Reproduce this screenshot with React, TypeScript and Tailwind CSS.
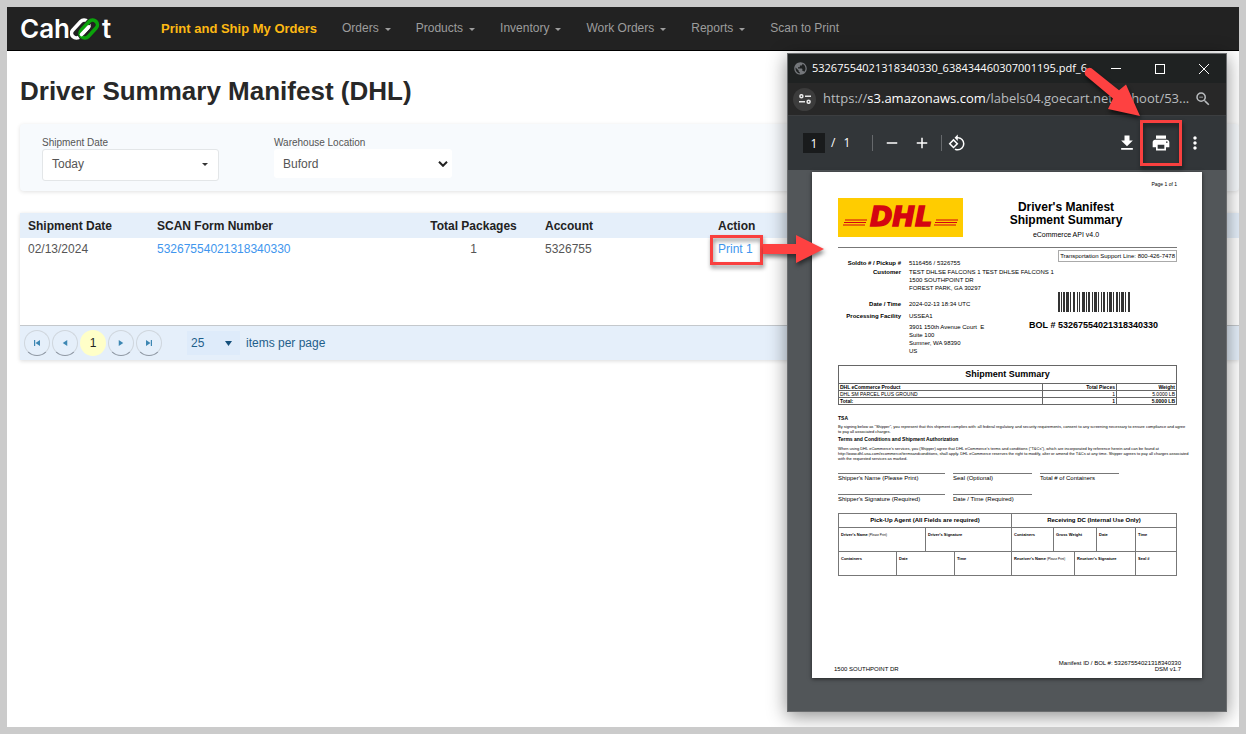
import type { ReactNode } from "react";
import {
  MdAdd,
  MdFileDownload,
  MdMoreVert,
  MdPrint,
  MdPublic,
  MdRemove,
  MdRotate90DegreesCcw,
  MdZoomOut,
} from "react-icons/md";

const menus = ["Orders", "Products", "Inventory", "Work Orders", "Reports"];

function Caret({ className }: { className: string }) {
  return (
    <svg viewBox="0 0 10 6" className={className} fill="currentColor" preserveAspectRatio="none" aria-hidden="true">
      <path d="M0 0h10L5 6z" />
    </svg>
  );
}

function Logo() {
  return (
    <a href="#home" aria-label="Cahoot" className="flex h-6 w-[141px] items-center font-[Inter,sans-serif] text-[26px] leading-6 font-semibold text-white">
      <span>Cah</span>
      <svg viewBox="0 0 30 22" className="h-[22px] w-[30px] shrink-0" fill="none" strokeWidth="3.6" aria-hidden="true">
        <rect x="5.500" y="0.500" width="9.500" height="21" rx="4.750" stroke="#fff" transform="rotate(43 10.250 11)" />
        <rect x="14" y="0.500" width="9.500" height="21" rx="4.750" stroke="#222" strokeWidth="5.400" transform="rotate(43 18.750 11)" />
        <rect x="14" y="0.500" width="9.500" height="21" rx="4.750" stroke="#0ba30b" transform="rotate(43 18.750 11)" />
        <path d="M11.500 16.500 18.800 8.800" stroke="#fff" strokeLinecap="round" />
      </svg>
      <span className="pl-0.5">t</span>
    </a>
  );
}

function NavBar() {
  return (
    <nav className="flex h-11 items-center border-b border-black bg-[#222] pl-[13px] text-xs text-[#9d9d9d]">
      <Logo />
      <ul className="flex items-center gap-[25px]">
        <li>
          <a href="#ship" className="text-[13px] font-bold text-[#fdb913]">Print and Ship My Orders</a>
        </li>
        {menus.map((m) => (
          <li key={m}>
            <button type="button" className="flex items-center gap-1.5">
              {m}
              <Caret className="mt-0.5 h-[3px] w-1.5" />
            </button>
          </li>
        ))}
        <li>
          <a href="#scan">Scan to Print</a>
        </li>
      </ul>
    </nav>
  );
}

function Filters() {
  return (
    <section className="flex gap-[55px] rounded bg-[#f7fafd] px-[22px] pt-[13px] pb-2.5 text-[#555] shadow-[0_1px_4px_rgba(0,0,0,0.12)]">
      <div className="w-[177px]">
        <label htmlFor="ship-date" className="block text-[10px] leading-3">Shipment Date</label>
        <button id="ship-date" type="button" className="flex h-8 w-full items-center justify-between rounded-[3px] border border-[#e3e6e8] bg-white pr-2.5 pb-0.5 pl-[9px] text-xs">
          Today
          <Caret className="h-[3px] w-1.5 text-[#333]" />
        </button>
      </div>
      <div className="w-[178px]">
        <label htmlFor="warehouse" className="block text-[10px] leading-3">Warehouse Location</label>
        <div className="relative">
          <select id="warehouse" className="h-[29px] w-full appearance-none rounded-[3px] bg-white pl-[9px] text-xs">
            <option>Buford</option>
          </select>
          <svg viewBox="0 0 10 6" className="pointer-events-none absolute top-3 right-1 h-1.5 w-2.5" fill="none" stroke="#222" strokeWidth="2" aria-hidden="true">
            <path d="m1 .8 4 4 4-4" />
          </svg>
        </div>
      </div>
    </section>
  );
}

function PageButton({ label, children }: { label: string; children: ReactNode }) {
  return (
    <button type="button" aria-label={label} className="flex size-[26px] items-center justify-center rounded-full border border-[#cfd6dd] border-b-[#8f98a3] text-[#3d87b3]">
      <svg viewBox="0 0 8 8" className="size-1.5" fill="currentColor" aria-hidden="true">{children}</svg>
    </button>
  );
}

function Pager() {
  return (
    <div className="flex h-[35px] items-center border-t border-[#c4c8cc] bg-[#e5effa] pl-1 text-xs text-[#1f5f8b]">
      <div className="flex gap-0.5">
        <PageButton label="First page"><path d="M0 0h1.600v8H0zM8 0v8L2 4z" /></PageButton>
        <PageButton label="Previous page"><path d="M7 0v8L1 4z" /></PageButton>
        <button type="button" className="size-[26px] rounded-full bg-[#ffffc8] text-[#222]">1</button>
        <PageButton label="Next page"><path d="M1 0v8l6-4z" /></PageButton>
        <PageButton label="Last page"><path d="M6.400 0H8v8H6.400zM0 0v8l6-4z" /></PageButton>
      </div>
      <div className="relative ml-[25px] w-[53px]">
        <select id="page-size" className="h-6 w-full appearance-none bg-[#deebfa] pl-1">
          <option>25</option>
        </select>
        <Caret className="pointer-events-none absolute top-2.5 right-2 h-[5px] w-[7px] text-[#15507c]" />
      </div>
      <label htmlFor="page-size" className="pl-1.5">items per page</label>
    </div>
  );
}

function Manifests() {
  return (
    <section className="mt-[22px] shadow-[0_1px_4px_rgba(0,0,0,0.15)]">
      <div className="min-h-28">
        <table className="w-full table-fixed text-left text-xs text-[#555]">
          <colgroup>
            <col className="w-[129px]" />
            <col className="w-[261px]" />
            <col className="w-[127px]" />
            <col className="w-[173px]" />
            <col />
          </colgroup>
          <thead className="h-[25px] bg-[#e5effa] text-[#222]">
            <tr>
              <th className="px-2">Shipment Date</th>
              <th className="px-2">SCAN Form Number</th>
              <th className="px-2 text-center">Total Packages</th>
              <th className="px-2">Account</th>
              <th className="px-2">Action</th>
            </tr>
          </thead>
          <tbody>
            <tr className="h-[22px]">
              <td className="px-2">02/13/2024</td>
              <td className="px-2">
                <a href="#form" className="text-[#4096ee]">53267554021318340330</a>
              </td>
              <td className="px-2 text-center">1</td>
              <td className="px-2">5326755</td>
              <td className="px-2">
                <span className="relative inline-block">
                  <a href="#print" className="text-[#4096ee]">Print 1</a>
                  <span className="absolute -top-1.5 -right-2.5 -bottom-2 -left-2 border-3 border-[#f9403f] drop-shadow-[1px_3px_2px_rgba(0,0,0,0.45)]" />
                  <svg viewBox="0 0 64 30" className="absolute top-[-7px] left-full z-20 ml-2.5 h-[30px] w-16 drop-shadow-[1px_3px_2px_rgba(0,0,0,0.5)]" fill="#fe4141" aria-hidden="true">
                    <path d="M0 10h33V1l28 14-28 14v-9H0z" />
                  </svg>
                </span>
              </td>
            </tr>
          </tbody>
        </table>
      </div>
      <Pager />
    </section>
  );
}

function BrowserChrome() {
  return (
    <>
      <div className="flex h-[29px] items-center bg-[#1f2222] pr-[17px] pl-[5px] font-['Open_Sans',sans-serif] text-[11px] text-white">
        <MdPublic className="size-[15px] shrink-0 text-[#74777b]" />
        <span className="flex-1 pl-1 whitespace-nowrap">53267554021318340330_638434460307001195.pdf_6</span>
        <div className="flex shrink-0 items-center gap-[34px]">
          <button type="button" aria-label="Minimize" className="h-px w-2.5 bg-white" />
          <button type="button" aria-label="Maximize" className="size-2.5 border border-white" />
          <button type="button" aria-label="Close" className="size-2.5">
            <svg viewBox="0 0 10 10" className="size-2.5" stroke="#fff" aria-hidden="true">
              <path d="m0 0 10 10M10 0 0 10" />
            </svg>
          </button>
        </div>
      </div>
      <div className="flex h-[33px] items-center border-b border-[#3c3e40] bg-[#282828] pr-3.5 pl-[5px] font-['Open_Sans',sans-serif] text-[13px] text-[#b9bcbf]">
        <button type="button" aria-label="Site information" className="flex size-[23px] shrink-0 items-center justify-center rounded-full bg-[#3c3c3c]">
          <svg viewBox="0 0 12 10" className="h-2.5 w-3" fill="none" stroke="#e8e8e8" strokeWidth="1.500" aria-hidden="true">
            <circle cx="2.400" cy="2.200" r="1.500" />
            <path d="M6 2.200h6M0 7.800h6" />
            <circle cx="9.600" cy="7.800" r="1.500" />
          </svg>
        </button>
        <span className="flex-1 pl-[7px] whitespace-nowrap">
          https://<span className="text-white">s3.amazonaws.com</span>/labels04.goecart.net/cahoot/53...
        </span>
        <MdZoomOut className="size-[18px] shrink-0" />
      </div>
      <div className="flex h-[54px] items-center bg-[#323639] pr-[21px] pl-[15px] font-['Open_Sans',sans-serif] text-xs text-white">
        <input aria-label="Page number" defaultValue="1" className="h-5 w-[22px] bg-[#191b1c] text-center" />
        <span className="pl-1.5">/</span>
        <span className="pl-2">1</span>
        <span className="ml-[22px] h-4 w-px bg-[#66696c]" />
        <button type="button" aria-label="Zoom out" className="ml-2.5"><MdRemove className="size-[18px]" /></button>
        <button type="button" aria-label="Zoom in" className="ml-3"><MdAdd className="size-[18px]" /></button>
        <span className="ml-2.5 h-4 w-px bg-[#66696c]" />
        <button type="button" aria-label="Rotate" className="ml-1.5"><MdRotate90DegreesCcw className="size-[18px]" /></button>
        <span className="flex-1" />
        <button type="button" aria-label="Download"><MdFileDownload className="size-5" /></button>
        <button type="button" aria-label="Print" className="relative ml-3.5">
          <MdPrint className="size-5" />
          <span className="absolute -inset-x-[11px] -inset-y-[13px] border-3 border-[#f9403f] drop-shadow-[1px_3px_2px_rgba(0,0,0,0.5)]" />
        </button>
        <button type="button" aria-label="More" className="ml-3.5"><MdMoreVert className="size-5" /></button>
      </div>
    </>
  );
}

const bars = [
  [0, 2], [3, 1], [5, 2], [8, 3], [12, 1], [15, 2], [19, 1], [21, 1], [24, 3], [28, 1], [30, 2],
  [34, 1], [36, 3], [40, 1], [43, 1], [45, 2], [49, 1], [51, 3], [55, 1], [58, 2], [61, 1], [63, 3], [67, 1], [70, 2],
];

function Detail({ label, gap, children }: { label: string; gap: string; children: ReactNode }) {
  return (
    <div className={`flex gap-2 ${gap}`}>
      <dt className="w-[63px] shrink-0 text-right font-bold whitespace-nowrap">{label}</dt>
      <dd className="whitespace-nowrap">{children}</dd>
    </div>
  );
}

function SignLine({ width, children }: { width: string; children: ReactNode }) {
  return <div className={`border-t border-[#777] whitespace-nowrap ${width}`}>{children}</div>;
}

function Small({ children }: { children: ReactNode }) {
  return <span className="text-[3px] font-normal">{children}</span>;
}

function ManifestPage() {
  return (
    <article className="flex min-h-[506px] flex-col bg-white pt-2 pr-[25px] pl-[26px] text-[6px] leading-[8px] text-black shadow-[0_1px_4px_rgba(0,0,0,0.6)]">
      <p className="text-right text-[5px]">Page 1 of 1</p>
      <header className="mt-2.5 flex h-[50px] border-b border-[#777]">
        <svg viewBox="0 0 125 39" className="h-[39px] w-[125px] shrink-0" role="img" aria-label="DHL">
          <rect width="125" height="39" fill="#fc0" />
          <g stroke="#d40511" strokeWidth="1.200">
            <path d="M7 22h22M6 24.500h22M5 27h22M98 22h22M97 24.500h22M96 27h22" />
          </g>
          <text x="63" y="28" textAnchor="middle" fill="#d40511" stroke="#d40511" strokeWidth="1.500" className="font-['DejaVu_Sans',sans-serif] text-[27px] font-bold italic">DHL</text>
        </svg>
        <div className="flex-1 pt-[3px] pr-2 text-center">
          <h2 className="text-xs leading-[13px] font-bold">Driver's Manifest<br />Shipment Summary</h2>
          <p className="pt-1 text-[7px] leading-[8px]">eCommerce API v4.0</p>
        </div>
      </header>
      <div className="flex h-[117px]">
        <dl className="w-[172px] shrink-0 pt-[11px]">
          <Detail label="Soldto # / Pickup #" gap="mb-px">5116456 / 5326755</Detail>
          <Detail label="Customer" gap="mb-2">
            TEST DHLSE FALCONS 1 TEST DHLSE FALCONS 1<br />1500 SOUTHPOINT DR<br />FOREST PARK, GA 30297
          </Detail>
          <Detail label="Date / Time" gap="mb-1">2024-02-13 18:34 UTC</Detail>
          <Detail label="Processing Facility" gap="mb-[3px]">USSEA1</Detail>
          <Detail label="" gap="">
            3901 150th Avenue Court&nbsp; E<br />Suite 100<br />Sumner, WA 98390<br />US
          </Detail>
        </dl>
        <div className="flex flex-1 flex-col items-end">
          <p className="mt-0.5 border border-[#aaa] px-px py-px whitespace-nowrap">Transportation Support Line: 800-426-7478</p>
          <div className="mt-[30px] mr-[19px] flex flex-col items-center">
            <svg viewBox="0 0 72 20" className="h-5 w-[72px]" fill="#333" role="img" aria-label="Barcode">
              {bars.map(([x, w]) => (
                <rect key={x} x={x} width={w} height="20" />
              ))}
            </svg>
            <p className="mt-2 text-[9px] leading-[10px] font-bold whitespace-nowrap">BOL # 53267554021318340330</p>
          </div>
        </div>
      </div>
      <table className="w-full table-fixed border-collapse border border-[#666] text-[5px] leading-[6px]">
        <colgroup>
          <col />
          <col className="w-[74px]" />
          <col className="w-[60px]" />
        </colgroup>
        <thead>
          <tr>
            <th colSpan={3} className="border border-[#666] py-0 text-[9px] leading-[17px]">Shipment Summary</th>
          </tr>
          <tr>
            <th className="border border-[#666] px-px text-left">DHL eCommerce Product</th>
            <th className="border border-[#666] px-px text-right">Total Pieces</th>
            <th className="border border-[#666] px-px text-right">Weight</th>
          </tr>
        </thead>
        <tbody>
          <tr>
            <td className="border border-[#666] px-px">DHL SM PARCEL PLUS GROUND</td>
            <td className="border border-[#666] px-px text-right">1</td>
            <td className="border border-[#666] px-px text-right">5.0000 LB</td>
          </tr>
          <tr className="font-bold">
            <td className="border border-[#666] px-px">Total:</td>
            <td className="border border-[#666] px-px text-right">1</td>
            <td className="border border-[#666] px-px text-right">5.0000 LB</td>
          </tr>
        </tbody>
      </table>
      <h3 className="mt-[9px] text-[5px] font-bold">TSA</h3>
      <p className="mt-0.5 text-[4px] leading-[5px] whitespace-nowrap">
        By signing below as "Shipper", you represent that this shipment complies with: all federal regulatory and security requirements, consent to any screening necessary to ensure compliance and agree
        <br />to pay all associated charges.
      </p>
      <h3 className="mt-px text-[5px] font-bold">Terms and Conditions and Shipment Authorization</h3>
      <p className="mt-[3px] text-[4px] leading-[5px] whitespace-nowrap">
        When using DHL eCommerce's services, you (Shipper) agree that DHL eCommerce's terms and conditions ("T&Cs"), which are incorporated by reference herein and can be found at
        <br />http://www.dhl-usa.com/ecommerce/termsandconditions, shall apply. DHL eCommerce reserves the right to modify, alter or amend the T&Cs at any time. Shipper agrees to pay all charges associated
        <br />with the requested services as marked.
      </p>
      <div className="mt-3 flex gap-2">
        <SignLine width="w-[107px]">Shipper's Name (Please Print)</SignLine>
        <SignLine width="w-[79px]">Seal (Optional)</SignLine>
        <SignLine width="w-[79px]">Total # of Containers</SignLine>
      </div>
      <div className="mt-3 flex gap-2">
        <SignLine width="w-[107px]">Shipper's Signature (Required)</SignLine>
        <SignLine width="w-[79px]">Date / Time (Required)</SignLine>
      </div>
      <table className="mt-2.5 w-full table-fixed border-collapse text-left text-[4px] leading-[5px] font-bold [&_td]:border [&_td]:border-[#777] [&_td]:px-0.5 [&_td]:pt-1 [&_td]:align-top [&_td]:whitespace-nowrap [&_th]:border [&_th]:border-[#777]">
        <colgroup>
          <col className="w-[58px]" />
          <col className="w-[29px]" />
          <col className="w-[29px]" />
          <col className="w-[57px]" />
          <col className="w-[42px]" />
          <col className="w-[21px]" />
          <col className="w-[22px]" />
          <col className="w-[39px]" />
          <col />
        </colgroup>
        <thead>
          <tr className="h-3.5 text-center text-[6px]">
            <th colSpan={4}>Pick-Up Agent (All Fields are required)</th>
            <th colSpan={5}>Receiving DC (Internal Use Only)</th>
          </tr>
        </thead>
        <tbody>
          <tr className="h-6">
            <td colSpan={2}>Driver's Name <Small>(Please Print)</Small></td>
            <td colSpan={2}>Driver's Signature</td>
            <td>Containers</td>
            <td colSpan={2}>Gross Weight</td>
            <td>Date</td>
            <td>Time</td>
          </tr>
          <tr className="h-6">
            <td>Containers</td>
            <td colSpan={2}>Date</td>
            <td>Time</td>
            <td colSpan={2}>Receiver's Name <Small>(Please Print)</Small></td>
            <td colSpan={2}>Receiver's Signature</td>
            <td>Seal #</td>
          </tr>
        </tbody>
      </table>
      <footer className="-mx-1 mt-auto flex items-end justify-between pb-1.5 leading-[6px]">
        <p>1500 SOUTHPOINT DR</p>
        <p className="text-right">Manifest ID / BOL #: 53267554021318340330<br />DSM v1.7</p>
      </footer>
    </article>
  );
}

function PdfWindow() {
  return (
    <aside className="absolute top-[46px] right-3 z-10 w-[440px] border border-[#6a6c6e] bg-[#525659] shadow-[0_4px_18px_rgba(0,0,0,0.45)]">
      <BrowserChrome />
      <div className="px-6 pt-0.5 pb-[33px]">
        <ManifestPage />
      </div>
      <svg viewBox="0 0 64 56" className="absolute top-2.5 left-[293px] h-14 w-16 drop-shadow-[1px_3px_2px_rgba(0,0,0,0.6)]" fill="#fe4141" aria-hidden="true">
        <path d="M10.500 4.200 38 26.300 45 20.500 59 52 27 45 32 34.500 4.500 11.500A5 5 0 0 1 10.500 4.200z" />
      </svg>
    </aside>
  );
}

export default function App() {
  return (
    <div className="relative min-h-screen overflow-hidden border-7 border-[#cbcbcb] bg-white font-['Liberation_Sans',Arial,sans-serif]">
      <NavBar />
      <main className="pt-6 pl-[13px]">
        <h1 className="mb-[17px] text-[26px] leading-8 font-bold text-[#282828]">Driver Summary Manifest (DHL)</h1>
        <Filters />
        <Manifests />
      </main>
      <PdfWindow />
    </div>
  );
}
